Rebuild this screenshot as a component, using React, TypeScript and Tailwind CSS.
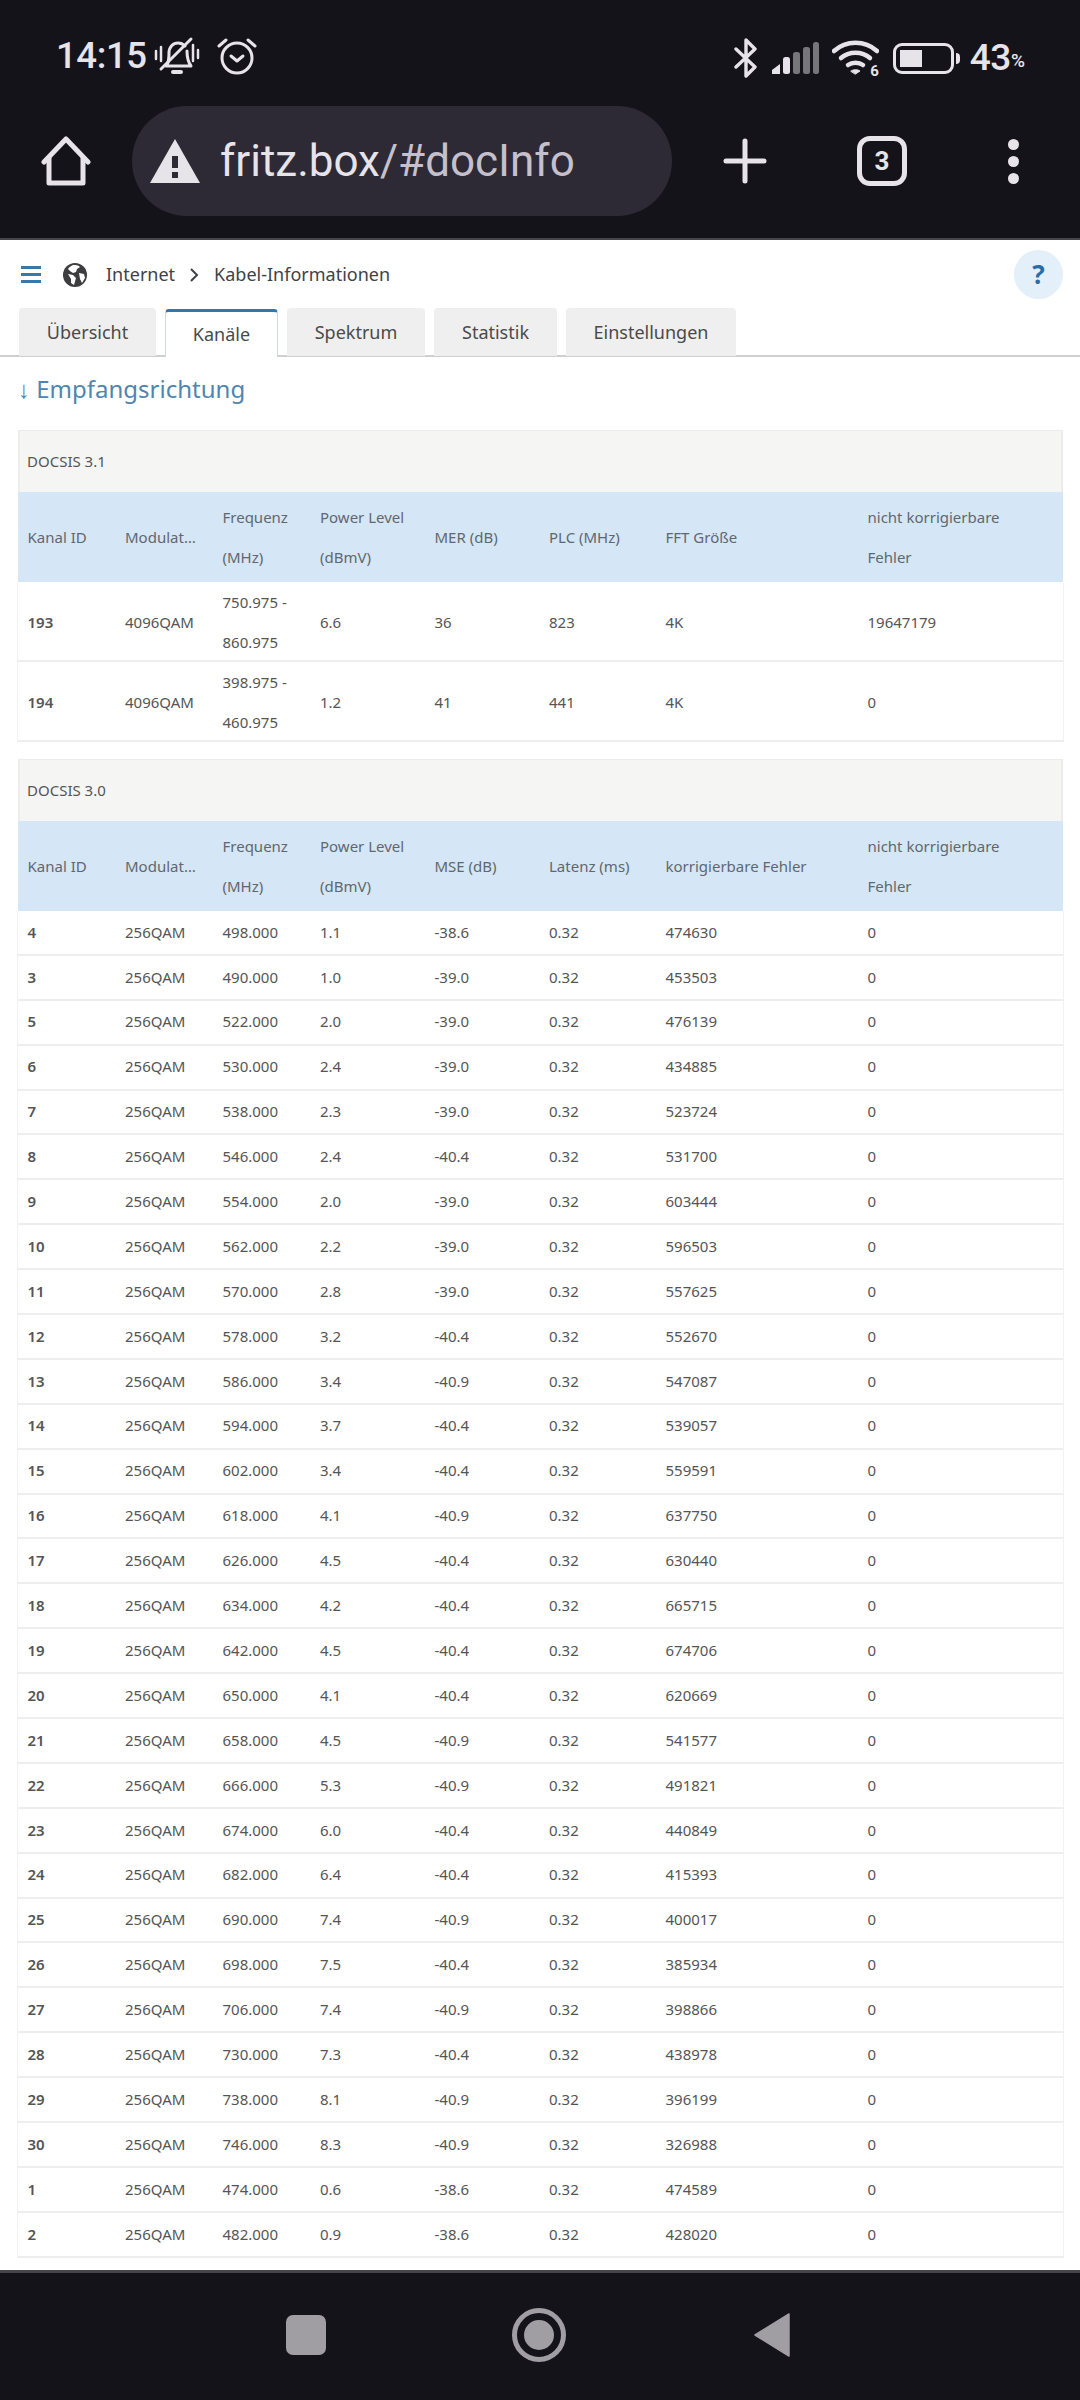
import React from 'react';

const cols = 'grid grid-cols-[97.5px_97.5px_97.5px_114.5px_114.5px_116.5px_202px_205px]';

const rows30: string[][] = [
  ['4', '498.000', '1.1', '-38.6', '474630'],
  ['3', '490.000', '1.0', '-39.0', '453503'],
  ['5', '522.000', '2.0', '-39.0', '476139'],
  ['6', '530.000', '2.4', '-39.0', '434885'],
  ['7', '538.000', '2.3', '-39.0', '523724'],
  ['8', '546.000', '2.4', '-40.4', '531700'],
  ['9', '554.000', '2.0', '-39.0', '603444'],
  ['10', '562.000', '2.2', '-39.0', '596503'],
  ['11', '570.000', '2.8', '-39.0', '557625'],
  ['12', '578.000', '3.2', '-40.4', '552670'],
  ['13', '586.000', '3.4', '-40.9', '547087'],
  ['14', '594.000', '3.7', '-40.4', '539057'],
  ['15', '602.000', '3.4', '-40.4', '559591'],
  ['16', '618.000', '4.1', '-40.9', '637750'],
  ['17', '626.000', '4.5', '-40.4', '630440'],
  ['18', '634.000', '4.2', '-40.4', '665715'],
  ['19', '642.000', '4.5', '-40.4', '674706'],
  ['20', '650.000', '4.1', '-40.4', '620669'],
  ['21', '658.000', '4.5', '-40.9', '541577'],
  ['22', '666.000', '5.3', '-40.9', '491821'],
  ['23', '674.000', '6.0', '-40.4', '440849'],
  ['24', '682.000', '6.4', '-40.4', '415393'],
  ['25', '690.000', '7.4', '-40.9', '400017'],
  ['26', '698.000', '7.5', '-40.4', '385934'],
  ['27', '706.000', '7.4', '-40.9', '398866'],
  ['28', '730.000', '7.3', '-40.4', '438978'],
  ['29', '738.000', '8.1', '-40.9', '396199'],
  ['30', '746.000', '8.3', '-40.9', '326988'],
  ['1', '474.000', '0.6', '-38.6', '474589'],
  ['2', '482.000', '0.9', '-38.6', '428020'],
];

const HeadCell = ({ children }: { children: React.ReactNode }) => (
  <div className="flex flex-col justify-center px-[9.5px] leading-[40px] overflow-hidden whitespace-nowrap">{children}</div>
);

const TableHead = ({ labels }: { labels: [string, string, string] }) => (
  <div className={`${cols} h-[90px] bg-[#d5e6f6] text-[#5f686f]`}>
    <HeadCell>Kanal ID</HeadCell>
    <HeadCell>Modulat…</HeadCell>
    <HeadCell><span>Frequenz</span><span>(MHz)</span></HeadCell>
    <HeadCell><span>Power Level</span><span>(dBmV)</span></HeadCell>
    <HeadCell>{labels[0]}</HeadCell>
    <HeadCell>{labels[1]}</HeadCell>
    <HeadCell>{labels[2]}</HeadCell>
    <HeadCell><span>nicht korrigierbare</span><span>Fehler</span></HeadCell>
  </div>
);

const Title = ({ children }: { children: React.ReactNode }) => (
  <div className="h-[62px] flex items-center pl-[7px] bg-[#f5f5f4] border-l-2 border-r-2 border-t border-[#ececec] text-[#555]">{children}</div>
);

const App = () => {
  return (
    <div className="w-[1080px] h-[2400px] flex flex-col overflow-hidden bg-white font-['Noto_Sans',sans-serif]">
      {/* browser chrome */}
      <div className="h-[240px] shrink-0 bg-[#15131a] border-b-2 border-[#46454b] font-['Roboto',sans-serif] text-[#e6e3e9]">
        <div className="h-[106px] flex items-start justify-between pl-[56px] pr-[55px] pt-[33px]">
          <div className="flex items-center">
            <span className="text-[36.5px] leading-[44px] font-medium tracking-[-0.4px] mt-[1px]">14:15</span>
            <svg className="ml-[7px]" width="46" height="40" viewBox="0 0 46 40" fill="none" stroke="#e6e3e9" strokeWidth="3" strokeLinecap="round" strokeLinejoin="round">
              <path d="M12 30c3-3 3-7 3-13 0-6 4-10 9-10 3 0 5 1 7 3M33 15c0 7 1 11 4 15H12" />
              <path d="M19 36h8" strokeWidth="4" />
              <path d="M7 33 37 3" />
              <path d="M2 15v8M7 11v14M39 9v16M44 14v8" strokeWidth="2.5" />
            </svg>
            <svg className="ml-[17px]" width="40" height="38" viewBox="0 0 40 38" fill="none" stroke="#e6e3e9" strokeWidth="3" strokeLinecap="round" strokeLinejoin="round">
              <circle cx="20" cy="21" r="15" />
              <path d="M14 19l6 5 6-5" strokeWidth="3" />
              <path d="M2 9l7-6M38 9l-7-6" />
            </svg>
          </div>
          <div className="flex items-center">
            <svg width="24" height="40" viewBox="0 0 24 40" fill="none" stroke="#e6e3e9" strokeWidth="3.4" strokeLinejoin="round" strokeLinecap="round">
              <path d="M2 11l19 18-9 9V2l9 9L2 29" />
            </svg>
            <svg className="ml-[13px]" width="48" height="32" viewBox="0 0 48 32">
              <path d="M1 32v-4l8-6v10z" fill="#e6e3e9" />
              <rect x="12" y="15" width="7" height="17" rx="2.5" fill="#e6e3e9" />
              <rect x="22" y="10" width="7" height="22" rx="2.5" fill="#77767b" />
              <rect x="32" y="5" width="7" height="27" rx="2.5" fill="#77767b" />
              <rect x="42" y="0" width="6" height="32" rx="2.5" fill="#77767b" />
            </svg>
            <div className="relative ml-[13px] w-[47px] h-[36px]">
              <svg width="47" height="36" viewBox="0 0 47 36" fill="none" stroke="#e6e3e9" strokeWidth="4.5" strokeLinecap="round">
                <path d="M2 11c12-11 31-11 43 0" />
                <path d="M9 18c8-7 21-7 29 0" />
                <path d="M16 25c4-3 11-3 15 0" />
                <path d="M19 31a6 4 0 0 1 9 0l-4.500 3z" fill="#e6e3e9" strokeWidth="1" />
              </svg>
              <span className="absolute right-0 bottom-[-3px] text-[15px] leading-[16px] font-bold bg-[#15131a] pl-[2px]">6</span>
            </div>
            <div className="ml-[14px] w-[61px] h-[31px] rounded-[9px] border-[3px] border-[#e6e3e9] p-[4px]">
              <div className="w-[22px] h-full bg-[#e6e3e9]" />
            </div>
            <div className="ml-[2px] w-[4px] h-[11px] rounded-r-full bg-[#e6e3e9]" />
            <span className="ml-[10px] text-[37px] leading-[44px] font-medium tracking-[-0.4px]">43</span>
            <span className="text-[19px] leading-[44px] mt-[6px] font-medium">%</span>
          </div>
        </div>
        <div className="h-[110px] flex items-center">
          <svg className="ml-[41px]" width="50" height="50" viewBox="0 0 50 50" fill="none" stroke="#e6e3e9" strokeWidth="5" strokeLinejoin="round" strokeLinecap="round">
            <path d="M3 26 25 3l22 23" />
            <path d="M8 22v25h34V22" />
          </svg>
          <div className="ml-[41px] w-[540px] h-[110px] rounded-full bg-[#2d2a35] flex items-center pl-[18px]">
            <svg width="50" height="44" viewBox="0 0 50 44">
              <path d="M25 0 50 44H0z" fill="#e6e3e9" />
              <rect x="22" y="17" width="6" height="12" fill="#2d2a35" />
              <rect x="22" y="33" width="6" height="6" fill="#2d2a35" />
            </svg>
            <span className="ml-[20px] text-[44px] leading-[52px] font-normal">
              fritz.box<span className="text-[#c5c0cc]">/#docInfo</span>
            </span>
          </div>
          <svg className="ml-[51px]" width="44" height="46" viewBox="0 0 44 46" stroke="#e6e3e9" strokeWidth="5" strokeLinecap="round">
            <path d="M22 3v40M3 23h38" />
          </svg>
          <div className="ml-[90px] w-[50px] h-[50px] rounded-[13px] border-[5px] border-[#e6e3e9] flex items-center justify-center text-[26px] font-bold leading-none">3</div>
          <div className="ml-[101px] flex flex-col gap-[6px]">
            <div className="w-[11px] h-[11px] rounded-full bg-[#e6e3e9]" />
            <div className="w-[11px] h-[11px] rounded-full bg-[#e6e3e9]" />
            <div className="w-[11px] h-[11px] rounded-full bg-[#e6e3e9]" />
          </div>
        </div>
      </div>

      {/* page */}
      <div className="flex-1 min-h-0 overflow-hidden text-[15px] text-[#555]">
        <div className="h-[69px] flex items-center pl-[21px] pr-[17px] text-[18px] text-[#3f4246]">
          <div className="w-[20px] flex flex-col gap-[4px]">
            <div className="h-[3px] bg-[#3a78a8]" />
            <div className="h-[3px] bg-[#3a78a8]" />
            <div className="h-[3px] bg-[#3a78a8]" />
          </div>
          <svg className="ml-[22px]" width="24" height="24" viewBox="0 0 24 24">
            <circle cx="12" cy="12" r="12" fill="#3d3d40" />
            <path d="M10 2c3 0 5 0 7 2l-3 2-1 3-3 1-3-2-2-2c1-2 3-3 5-4zM5 11l5 1 3 3-2 7-3-2v-4zM16 10l5 1 1 4-3 5-2-4z" fill="#fff" />
          </svg>
          <span className="ml-[19px]">Internet</span>
          <svg className="ml-[15px]" width="9" height="14" viewBox="0 0 9 14" fill="none" stroke="#3f4246" strokeWidth="2">
            <path d="M1 1l6 6-6 6" />
          </svg>
          <span className="ml-[15px]">Kabel-Informationen</span>
          <div className="ml-auto w-[49px] h-[49px] rounded-full bg-[#e3eff9] flex items-center justify-center text-[26px] font-bold text-[#2a6ca8]">?</div>
        </div>

        <div className="h-[48px] flex items-end pl-[19px] gap-[9px] border-b-2 border-[#cfcfcf] text-[18px] text-[#4a4a4a]">
          <div className="w-[137px] h-[48px] -mb-[1px] rounded-t-[4px] bg-[#efefef] flex items-center justify-center">Übersicht</div>
          <div className="w-[113px] h-[48px] -mb-[2px] rounded-t-[4px] bg-white border-t-[3px] border-x border-t-[#2f78ad] border-x-[#cfd8e0] flex items-center justify-center">Kanäle</div>
          <div className="w-[138px] h-[48px] -mb-[1px] rounded-t-[4px] bg-[#efefef] flex items-center justify-center">Spektrum</div>
          <div className="w-[123px] h-[48px] -mb-[1px] rounded-t-[4px] bg-[#efefef] flex items-center justify-center">Statistik</div>
          <div className="w-[170px] h-[48px] -mb-[1px] rounded-t-[4px] bg-[#efefef] flex items-center justify-center">Einstellungen</div>
        </div>

        <div className="h-[73px] flex items-center pl-[18px] pb-[10px] text-[24px] text-[#4f86b0]">↓ Empfangsrichtung</div>

        <div className="mx-[18px] w-[1045px]">
          <Title>DOCSIS 3.1</Title>
          <TableHead labels={['MER (dB)', 'PLC (MHz)', 'FFT Größe']} />
          {[
            ['193', '750.975 -', '860.975', '6.6', '36', '823', '4K', '19647179'],
            ['194', '398.975 -', '460.975', '1.2', '41', '441', '4K', '0'],
          ].map((r) => (
            <div key={r[0]} className={`${cols} h-[80px] items-center border-b-2 border-[#eeeeee] border-x border-x-[#f2f2f2] -mx-px leading-[40px] pb-[2px]`}>
              <div className="px-[9.5px] font-semibold">{r[0]}</div>
              <div className="px-[9.5px]">4096QAM</div>
              <div className="px-[9.5px] flex flex-col"><span>{r[1]}</span><span>{r[2]}</span></div>
              <div className="px-[9.5px]">{r[3]}</div>
              <div className="px-[9.5px]">{r[4]}</div>
              <div className="px-[9.5px]">{r[5]}</div>
              <div className="px-[9.5px]">{r[6]}</div>
              <div className="px-[9.5px]">{r[7]}</div>
            </div>
          ))}
        </div>

        <div className="mx-[18px] w-[1045px] mt-[17px]">
          <Title>DOCSIS 3.0</Title>
          <TableHead labels={['MSE (dB)', 'Latenz (ms)', 'korrigierbare Fehler']} />
          {rows30.map((r) => (
            <div key={r[0]} className={`${cols} h-[44.9px] items-center border-b-2 border-[#eeeeee] border-x border-x-[#f2f2f2] -mx-px pb-[1px]`}>
              <div className="px-[9.5px] font-semibold">{r[0]}</div>
              <div className="px-[9.5px]">256QAM</div>
              <div className="px-[9.5px]">{r[1]}</div>
              <div className="px-[9.5px]">{r[2]}</div>
              <div className="px-[9.5px]">{r[3]}</div>
              <div className="px-[9.5px]">0.32</div>
              <div className="px-[9.5px]">{r[4]}</div>
              <div className="px-[9.5px]">0</div>
            </div>
          ))}
        </div>
      </div>

      {/* android nav */}
      <div className="h-[130px] shrink-0 bg-[#15131a] border-t-[3px] border-[#46454b] flex items-start pt-[35px]">
        <div className="ml-[286px] mt-[7px] w-[40px] h-[40px] rounded-[7px] bg-[#a09ea3]" />
        <div className="ml-[186px] w-[54px] h-[54px] rounded-full border-[5px] border-[#a09ea3] flex items-center justify-center">
          <div className="w-[30px] h-[30px] rounded-full bg-[#a09ea3]" />
        </div>
        <svg className="ml-[188px] mt-[4px]" width="36" height="46" viewBox="0 0 36 46">
          <path d="M35 2v42L1 23z" fill="#a09ea3" stroke="#a09ea3" strokeWidth="1.5" strokeLinejoin="round" />
        </svg>
      </div>
    </div>
  );
};

export default App;
